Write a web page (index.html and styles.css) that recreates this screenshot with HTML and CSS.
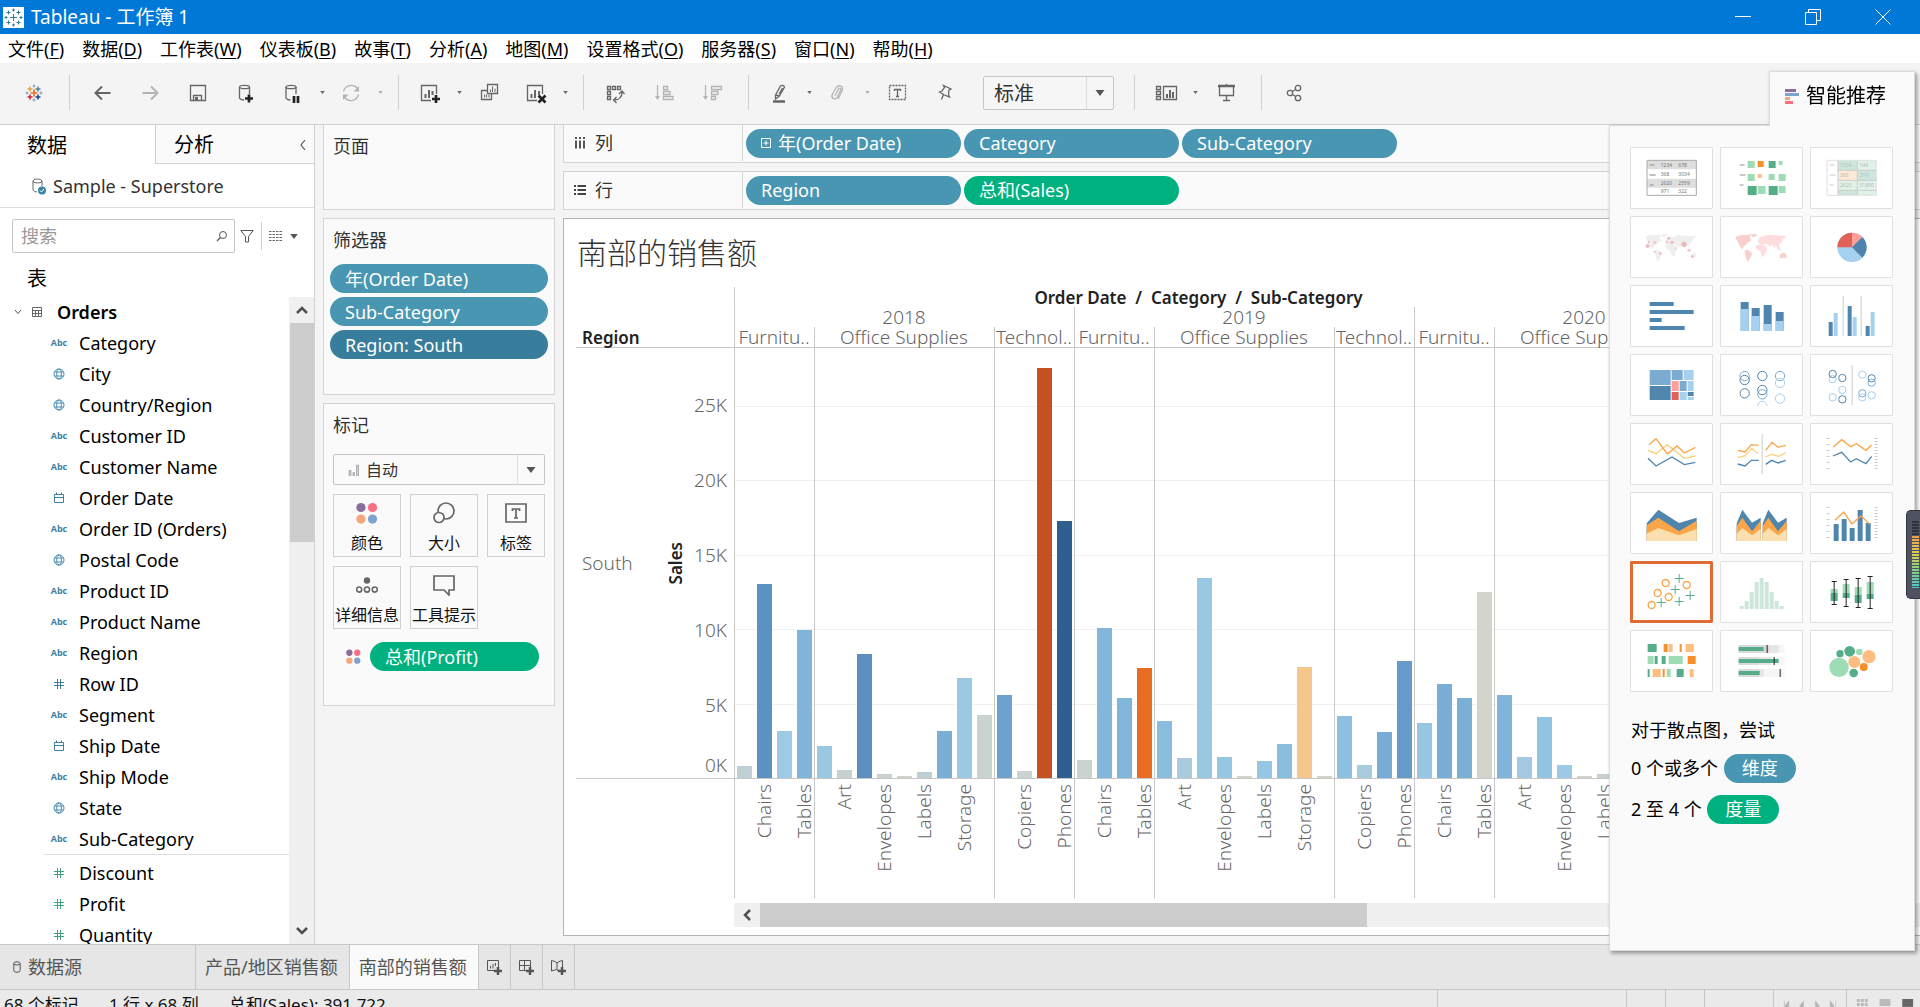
FILE: index.html
```html
<!DOCTYPE html>
<html lang="zh-CN">
<head>
<meta charset="utf-8">
<title>Tableau - 工作簿 1</title>
<link rel="stylesheet" href="styles.css">
</head>
<body>
<svg class="defs" aria-hidden="true">
  <symbol id="globe" viewBox="0 0 12 12"><g fill="none" stroke="#4a8fb0"><circle cx="6" cy="6" r="5"/><ellipse cx="6" cy="6" rx="2.3" ry="5"/><path d="M1.5 4h9M1.5 8h9"/></g></symbol>
  <symbol id="cal" viewBox="0 0 12 12"><path d="M1.5 2.5h9v8h-9zM1.5 5.5h9M3.5 .5v2M8.500 .5v2" fill="none" stroke="#3f7f9f"/></symbol>
  <symbol id="hash" viewBox="0 0 12 12"><path d="M4.500 1v10M7.500 1v10M1 4.500h10M1 7.500h10" fill="none" stroke="currentColor"/></symbol>
  <symbol id="caret" viewBox="0 0 6 4"><path d="M0 0h6L3 4z" fill="currentColor"/></symbol>
  <symbol id="dots" viewBox="0 0 20 20"><circle cx="4.500" cy="5" r="4.200" fill="#8a6f9e"/><circle cx="15" cy="5" r="4.200" fill="#f76f81"/><circle cx="4.500" cy="15.500" r="4.200" fill="#f3a77b"/><circle cx="15" cy="15.500" r="4.200" fill="#7ea3cc"/></symbol>
</svg>

<header class="titlebar">
  <svg class="app-icon" viewBox="0 0 21 21"><rect width="21" height="21" fill="#fff"/><path d="M10.500 7v7M7 10.500h7M5.500 3.500v4M3.500 5.500h4M15.500 3.500v4M13.500 5.500h4M5.500 13.500v4M3.500 15.500h4M15.500 13.500v4M13.500 15.500h4M10.500 1.500v3M9 3h3M10.500 16.500v3M9 18h3M1.500 10.500h3M3 9v3M16.500 10.500h3M18 9v3" stroke="#2b7ba3" fill="none"/></svg>
  <h1>Tableau - 工作簿 1</h1>
  <div class="win-buttons">
    <button aria-label="最小化"><svg viewBox="0 0 16 16"><path d="M0 7.500h16" stroke="#fff"/></svg></button>
    <button aria-label="还原"><svg viewBox="0 0 16 16"><path d="M.5 3.500h11v12H.5zM3.500 3.500v-3h12v11h-4" stroke="#fff" fill="none"/></svg></button>
    <button aria-label="关闭"><svg viewBox="0 0 16 16"><path d="M.5 .5l15 15M15.500 .5l-15 15" stroke="#fff" fill="none"/></svg></button>
  </div>
</header>

<nav class="menubar">
  <button>文件(<u>F</u>)</button><button>数据(<u>D</u>)</button><button>工作表(<u>W</u>)</button><button>仪表板(<u>B</u>)</button><button>故事(<u>T</u>)</button><button>分析(<u>A</u>)</button><button>地图(<u>M</u>)</button><button>设置格式(<u>O</u>)</button><button>服务器(<u>S</u>)</button><button>窗口(<u>N</u>)</button><button>帮助(<u>H</u>)</button>
</nav>

<div class="toolbar" role="toolbar">
  <button class="tool" aria-label="开始"><svg viewBox="0 0 24 24"><g fill="none" stroke-width="1.500"><path d="M12 8.500v7M8.500 12h7" stroke="#eb6b2d" stroke-width="1.700"/><path d="M8 5.500v5M5.500 8h5" stroke="#e8a33d"/><path d="M16 5.500v5M13.500 8h5" stroke="#4f8199"/><path d="M8 13.500v5M5.500 16h5" stroke="#d0203f"/><path d="M16 13.500v5M13.500 16h5" stroke="#1f3f80"/><path d="M12 3.500v3M10.500 5h3M12 17.500v3M10.500 19h3M5 10.500v3M3.500 12h3M19 10.500v3M17.500 12h3" stroke="#7d9ab5" stroke-width="1"/></g></svg></button>
  <span class="sep"></span>
  <button class="tool" aria-label="撤消"><svg viewBox="0 0 24 24"><path d="M19.500 12H5M11 5.500L4.500 12l6.500 6.500" class="ln heavy"/></svg></button>
  <button class="tool off" aria-label="重做"><svg viewBox="0 0 24 24"><path d="M3.500 12H18M12 5.500l6.500 6.500-6.500 6.500" class="ln heavy"/></svg></button>
  <button class="tool" aria-label="保存"><svg viewBox="0 0 24 24"><path d="M3.500 4.500h15v15h-15zM6.500 19.500v-5h8v5" class="ln mid"/><path d="M8 16h3v3H8z" class="fl"/></svg></button>
  <button class="tool" aria-label="新建数据源"><svg viewBox="0 0 24 24"><ellipse cx="9.500" cy="6" rx="5" ry="1.700" class="ln mid"/><path d="M4.500 6v11q1 2 4.500 2M14.500 6v7" class="ln mid"/><path d="M10 17.500h8M14 13.500v8" class="ln over"/></svg></button>
  <button class="tool split" aria-label="暂停自动更新"><svg viewBox="0 0 24 24"><ellipse cx="10" cy="6" rx="5" ry="1.700" class="ln mid"/><path d="M5 6v11q1 2 4.500 2M15 6v7" class="ln mid"/><path d="M13 15v7M17 15v7" class="ln over"/></svg></button>
  <button class="drop" aria-label="更多"><svg><use href="#caret"/></svg></button>
  <button class="tool split off" aria-label="刷新"><svg viewBox="0 0 24 24"><path d="M4.500 10.500a8 8 0 0 1 14-3M19.500 13.500a8 8 0 0 1-14 3" class="ln mid"/><path d="M20 5v5.500h-5.500zM4 19v-5.500h5.500z" class="fl"/></svg></button>
  <button class="drop off" aria-label="更多"><svg><use href="#caret"/></svg></button>
  <span class="sep"></span>
  <button class="tool split" aria-label="新建工作表"><svg viewBox="0 0 24 24"><path d="M13 19.500H3.500v-15h15V13" class="ln mid"/><path d="M7.500 13v4M11 9v8M14.500 10v4" class="ln heavy"/><path d="M14 18h8M18 14v8" class="ln over"/></svg></button>
  <button class="drop" aria-label="更多"><svg><use href="#caret"/></svg></button>
  <button class="tool" aria-label="复制"><svg viewBox="0 0 24 24"><path d="M9.500 3.500h10v9h-10zM9 9.500H3.500v9h10v-5.500" class="ln mid"/><path d="M12.500 8.500v2.500M14.500 5.500V11M17 7.500V11M6.500 13.500v3M8.500 13.500v3M11 13.500v3" class="ln"/></svg></button>
  <button class="tool split" aria-label="清除"><svg viewBox="0 0 24 24"><path d="M13 19.500H3.500v-15h15V13" class="ln mid"/><path d="M7.500 13v4M11 9v8M15 10v4" class="ln heavy"/><path d="M14.500 14.500l7 7M21.500 14.500l-7 7" class="ln over"/></svg></button>
  <button class="drop" aria-label="更多"><svg><use href="#caret"/></svg></button>
  <span class="sep"></span>
  <button class="tool" aria-label="交换行和列"><svg viewBox="0 0 24 24"><path d="M2.500 5.500h3v3h-3zM7.500 5.500h3v3h-3zM12.500 5.500h3v3h-3zM2.500 10.500h3v3h-3zM2.500 15.500h3v3h-3z" class="ln mid"/><path d="M9 19q8 0 8-8M11.500 16L8.500 19l3 3M14 13l3-3 2.500 3" class="ln mid"/></svg></button>
  <button class="tool off" aria-label="升序"><svg viewBox="0 0 24 24"><path d="M4.500 4v13M10.500 5.500h4v3h-4zM10.500 10.500h6.500v3h-6.500zM10.500 15.500h9.500v3h-9.500z" class="ln mid"/><path d="M2 15h5l-2.500 4z" class="fl"/></svg></button>
  <button class="tool off" aria-label="降序"><svg viewBox="0 0 24 24"><path d="M4.500 4v13M10.500 5.500h10v3h-10zM10.500 10.500h6.500v3h-6.500zM10.500 15.500h4v3h-4z" class="ln mid"/><path d="M2 15h5l-2.500 4z" class="fl"/></svg></button>
  <span class="sep"></span>
  <button class="tool split" aria-label="突出显示"><svg viewBox="0 0 24 24"><path d="M7.500 14l5-9q2.500-1.500 4 1l-5 9zM7.500 14v4l4-3M14.500 7l-3.500 6" class="ln mid"/><path d="M5 20.500h12" class="ln bold"/></svg></button>
  <button class="drop" aria-label="更多"><svg><use href="#caret"/></svg></button>
  <button class="tool split off" aria-label="组"><svg viewBox="0 0 24 24"><path d="M9 15l3.500-7q2-2 2.500.5L11.500 16q-2 3-4.500 1.500Q5 16 6.500 13L10 7q2-3 5-2 2.500 1.500 1 5l-4 8" class="ln mid"/></svg></button>
  <button class="drop off" aria-label="更多"><svg><use href="#caret"/></svg></button>
  <button class="tool" aria-label="显示标记标签"><svg viewBox="0 0 24 24"><path d="M3.500 4.500h16v14h-16z" class="ln mid" stroke-dasharray="2 1"/><path d="M8.500 10V8.500h6V10M11.500 8.500v7M10 15.500h3" class="ln mid"/></svg></button>
  <button class="tool" aria-label="固定轴"><svg viewBox="0 0 24 24"><path d="M9.500 4.500L17 8l-2 1-.5 4.500 1 2.500-5-2-5-3 2.500-1 2.500-3.500zM9.500 13.500L7.500 18.500" class="ln mid"/></svg></button>
  <label class="fit combo"><select aria-label="适合"><option>标准</option></select><svg><use href="#caret"/></svg></label>
  <span class="sep"></span>
  <button class="tool split" aria-label="显示卡"><svg viewBox="0 0 24 24"><path d="M2.500 5.500h4v3h-4zM2.500 10.500h4v3h-4zM2.500 15.500h4v3h-4zM9.500 5.500h13v13h-13z" class="ln mid"/><path d="M13 13v4M16 9v8M19 11v6" class="ln heavy"/></svg></button>
  <button class="drop" aria-label="更多"><svg><use href="#caret"/></svg></button>
  <button class="tool" aria-label="演示模式"><svg viewBox="0 0 24 24"><path d="M4 5h17" class="ln bold"/><path d="M5.500 6v8.500h14V6M12.500 3v2M12.500 15v4.500M9 19.500h7" class="ln mid"/></svg></button>
  <span class="sep"></span>
  <button class="tool" aria-label="共享"><svg viewBox="0 0 24 24"><circle cx="7" cy="12" r="2.700" class="ln mid"/><circle cx="15" cy="7" r="2.700" class="ln mid"/><circle cx="15" cy="17" r="2.700" class="ln mid"/><path d="M9.500 10.500l3.200-2M9.500 13.500l3.200 2" class="ln mid"/></svg></button>
</div>

<main class="workspace">
  <aside class="data-pane">
    <div class="pane-tabs">
      <button class="pane-tab on">数据</button>
      <button class="pane-tab">分析<svg viewBox="0 0 6 12"><path d="M5 1L1 6l4 5" fill="none" stroke="#555" stroke-width="1.200"/></svg></button>
    </div>
    <div class="source"><svg viewBox="0 0 16 18"><path d="M2 4v9q1 2 4 2M11 4v5" class="ln"/><ellipse cx="6.500" cy="4" rx="4.500" ry="2" class="ln"/><circle cx="11" cy="13.500" r="4" fill="#3a85a8"/><path d="M9 13.500l1.500 1.500 2.500-3" stroke="#fff" fill="none"/></svg>Sample - Superstore</div>
    <div class="search-row">
      <label class="search"><input type="text" placeholder="搜索" aria-label="搜索"><svg viewBox="0 0 12 12"><circle cx="7" cy="5" r="3.500" class="ln"/><path d="M4.500 7.500L1 11" class="ln mid"/></svg></label>
      <button class="filter-btn" aria-label="筛选"><svg viewBox="0 0 14 14"><path d="M.8 1.500h12.400L8.500 7.500v5.500h-3V7.500z" class="ln"/></svg></button>
      <button class="view-btn" aria-label="视图"><svg class="rows" viewBox="0 0 13 10"><path d="M0 .5h13M0 3.500h13M0 6.500h13M0 9.500h13" stroke="#666" stroke-dasharray="2.500 1"/></svg><svg class="car"><use href="#caret"/></svg></button>
    </div>
    <h2 class="tables-head">表</h2>
    <div class="tree">
      <ul class="fields">
        <li class="table-name"><svg class="chev" viewBox="0 0 8 6"><path d="M1 1l3 3.500L7 1" fill="none" stroke="#555"/></svg><svg class="tbl" viewBox="0 0 12 12"><path d="M1.500 1.500h9v9h-9zM1.500 4.500h9M1.500 7.500h9M4.500 4v6.500M7.500 4v6.500" fill="none" stroke="#666"/></svg>Orders</li>
        <li><i>Abc</i>Category</li>
        <li><svg><use href="#globe"/></svg>City</li>
        <li><svg><use href="#globe"/></svg>Country/Region</li>
        <li><i>Abc</i>Customer ID</li>
        <li><i>Abc</i>Customer Name</li>
        <li><svg><use href="#cal"/></svg>Order Date</li>
        <li><i>Abc</i>Order ID (Orders)</li>
        <li><svg><use href="#globe"/></svg>Postal Code</li>
        <li><i>Abc</i>Product ID</li>
        <li><i>Abc</i>Product Name</li>
        <li><i>Abc</i>Region</li>
        <li><svg><use href="#hash"/></svg>Row ID</li>
        <li><i>Abc</i>Segment</li>
        <li><svg><use href="#cal"/></svg>Ship Date</li>
        <li><i>Abc</i>Ship Mode</li>
        <li><svg><use href="#globe"/></svg>State</li>
        <li><i>Abc</i>Sub-Category</li>
        <li class="measure first"><svg><use href="#hash"/></svg>Discount</li>
        <li class="measure"><svg><use href="#hash"/></svg>Profit</li>
        <li class="measure"><svg><use href="#hash"/></svg>Quantity</li>
      </ul>
      <div class="vscroll"><svg viewBox="0 0 12 8"><path d="M1 7l5-5 5 5" class="arrow"/></svg><span class="thumb"></span><svg viewBox="0 0 12 8"><path d="M1 1l5 5 5-5" class="arrow"/></svg></div>
    </div>
  </aside>

  <section class="cards">
    <div class="card pages"><h3>页面</h3></div>
    <div class="card filters"><h3>筛选器</h3>
      <button class="pill">年(Order Date)</button>
      <button class="pill">Sub-Category</button>
      <button class="pill dark">Region: South</button>
    </div>
    <div class="card marks"><h3>标记</h3>
      <label class="mark-type combo"><svg class="bars" viewBox="0 0 12 12"><path d="M1 6.500h2v5H1zM5 8.500h1.500v3H5zM8.500 1h2v10.500h-2z" fill="#ccc" stroke="#999" stroke-width=".7"/></svg><select aria-label="标记类型"><option>自动</option></select><svg class="car"><use href="#caret"/></svg></label>
      <div class="mark-grid">
        <button><svg viewBox="0 0 20 20"><use href="#dots"/></svg>颜色</button>
        <button><svg viewBox="0 0 22 22"><circle cx="13" cy="9" r="8" class="ln bigline"/><circle cx="6" cy="15.500" r="5" stroke="#666" stroke-width="1.700" fill="#fafafa"/></svg>大小</button>
        <button><svg viewBox="0 0 22 22"><path d="M1 2h20v18H1z" class="ln bigline"/><path d="M7.500 9V7h7v2M11 7v9M9 16h4" class="ln bigline"/></svg>标签</button>
        <button><svg viewBox="0 0 24 22"><circle cx="12" cy="6" r="3.500" fill="#666"/><circle cx="3.500" cy="16" r="2.800" class="ln bigline"/><circle cx="12" cy="16" r="2.800" class="ln bigline"/><circle cx="20.500" cy="16" r="2.800" class="ln bigline"/></svg>详细信息</button>
        <button><svg viewBox="0 0 22 22"><path d="M1 2h20v14h-5v5l-5-5H1z" class="ln bigline"/></svg>工具提示</button>
      </div>
      <div class="encoding"><svg><use href="#dots"/></svg><button class="pill green">总和(Profit)</button></div>
    </div>
  </section>

  <section class="viz">
    <div class="shelf"><span class="shelf-name"><svg viewBox="0 0 12 12"><path d="M2 0v2M6 0v2M10 0v2M2 3.500v8M6 3.500v8M10 3.500v8" stroke="#444" stroke-width="1.800"/></svg>列</span><button class="pill"><svg viewBox="0 0 10 10"><path d="M.5 .5h9v9h-9zM5 2.500v5M2.500 5h5" fill="none" stroke="#fff"/></svg>年(Order Date)</button><button class="pill">Category</button><button class="pill">Sub-Category</button></div>
    <div class="shelf"><span class="shelf-name"><svg viewBox="0 0 12 12"><path d="M0 2h2M0 6h2M0 10h2M3.500 2h8.500M3.500 6h8.500M3.500 10h8.500" stroke="#444" stroke-width="1.800"/></svg>行</span><button class="pill">Region</button><button class="pill green">总和(Sales)</button></div>

    <div class="sheet">
      <h2>南部的销售额</h2>
      <div class="chart">
        <div class="row-head">
          <div class="region-label">Region</div>
          <div class="row-body">
            <span class="member">South</span><span class="axis-title">Sales</span>
            <div class="ticks"><span>25K</span><span>20K</span><span>15K</span><span>10K</span><span>5K</span><span>0K</span></div>
          </div>
        </div>
        <div class="col-area">
          <div class="field-title">Order Date&nbsp; / &nbsp;Category&nbsp; / &nbsp;Sub-Category</div>
          <div class="years">
            <div class="year"><div class="year-name">2018</div><div class="panes">
              <div class="pane"><div class="cat">Furnitu..</div><div class="plot"><b style="height:12px;background:#bfcfd3"></b><b style="height:194px;background:#5c92c1"></b><b style="height:47px;background:#9ccbe3"></b><b style="height:148px;background:#80b5da"></b></div><div class="names"><span>Chairs</span><span>Tables</span></div></div>
              <div class="pane wide"><div class="cat">Office Supplies</div><div class="plot"><b style="height:32px;background:#9ac8e2"></b><b style="height:8px;background:#c4d1d0"></b><b style="height:124px;background:#5b8fbe"></b><b style="height:4px;background:#c8d2ce"></b><b style="height:2px;background:#d0d1c8"></b><b style="height:6px;background:#bccfd4"></b><b style="height:47px;background:#79afd7"></b><b style="height:100px;background:#9bc9e2"></b><b style="height:63px;background:#c9d3cf"></b></div><div class="names"><span>Art</span><span>Envelopes</span><span>Labels</span><span>Storage</span></div></div>
              <div class="pane"><div class="cat">Technol..</div><div class="plot"><b style="height:83px;background:#6ea2ce"></b><b style="height:7px;background:#c9d3cf"></b><b style="height:410px;background:#c55122"></b><b style="height:257px;background:#2d5f91"></b></div><div class="names"><span>Copiers</span><span>Phones</span></div></div>
            </div></div>
            <div class="year"><div class="year-name">2019</div><div class="panes">
              <div class="pane"><div class="cat">Furnitu..</div><div class="plot"><b style="height:18px;background:#c9d3cf"></b><b style="height:150px;background:#82b6da"></b><b style="height:80px;background:#82b5da"></b><b style="height:110px;background:#e86c22"></b></div><div class="names"><span>Chairs</span><span>Tables</span></div></div>
              <div class="pane wide"><div class="cat">Office Supplies</div><div class="plot"><b style="height:57px;background:#8abcdd"></b><b style="height:20px;background:#aacbdd"></b><b style="height:200px;background:#99c8e3"></b><b style="height:21px;background:#95c6e2"></b><b style="height:2px;background:#d3d4ca"></b><b style="height:17px;background:#95c6e3"></b><b style="height:34px;background:#8abedd"></b><b style="height:111px;background:#f5c78c"></b><b style="height:2px;background:#d3d4ca"></b></div><div class="names"><span>Art</span><span>Envelopes</span><span>Labels</span><span>Storage</span></div></div>
              <div class="pane"><div class="cat">Technol..</div><div class="plot"><b style="height:62px;background:#8cbfe0"></b><b style="height:13px;background:#a8cbdd"></b><b style="height:46px;background:#77acd6"></b><b style="height:117px;background:#669ac8"></b></div><div class="names"><span>Copiers</span><span>Phones</span></div></div>
            </div></div>
            <div class="year"><div class="year-name">2020</div><div class="panes">
              <div class="pane"><div class="cat">Furnitu..</div><div class="plot"><b style="height:55px;background:#96c6e1"></b><b style="height:94px;background:#79afd7"></b><b style="height:80px;background:#7bb0d6"></b><b style="height:186px;background:#d3d4cb"></b></div><div class="names"><span>Chairs</span><span>Tables</span></div></div>
              <div class="pane wide"><div class="cat">Office Supplies</div><div class="plot"><b style="height:83px;background:#80b4da"></b><b style="height:21px;background:#a2c9df"></b><b style="height:61px;background:#90c4e2"></b><b style="height:13px;background:#9cc9e3"></b><b style="height:2px;background:#d3d4ca"></b><b style="height:4px;background:#c6d2d0"></b></div><div class="names"><span>Art</span><span>Envelopes</span><span>Labels</span></div></div>
            </div></div>
          </div>
          <div class="hscroll"><svg viewBox="0 0 8 12"><path d="M7 1L2 6l5 5" class="arrow"/></svg><span class="thumb"></span></div>
        </div>
      </div>
    </div>
  </section>
</main>

<nav class="sheet-tabs">
  <button class="source-tab"><svg viewBox="0 0 8 12"><path d="M.8 2.500v7q0 1.800 3.200 1.800t3.200-1.800v-7Q7.200.8 4 .8T.8 2.500q0 1.500 3.200 1.500t3.200-1.500" class="ln"/></svg>数据源</button>
  <button>产品/地区销售额</button>
  <button class="on">南部的销售额</button>
  <button class="new" aria-label="新建工作表"><svg viewBox="0 0 16 16"><path d="M8 11.500H1.500v-10h11V8M4.500 7v2.500M7 5v4.500M9.500 4v3" class="ln"/><path d="M8 12h8M12 8v8" class="ln bold"/></svg></button>
  <button class="new" aria-label="新建仪表板"><svg viewBox="0 0 16 16"><path d="M8 11.500H1.500v-10h11V8M6.500 1.500v10M1.500 6.500h11" class="ln"/><path d="M8 12h8M12 8v8" class="ln bold"/></svg></button>
  <button class="new" aria-label="新建故事"><svg viewBox="0 0 16 16"><path d="M8 12L6.500 10.500 1.500 12V1.500L5 2.500l2 1.500 2-1.500 3.500-1V8M7 4v7" class="ln"/><path d="M8 12h8M12 8v8" class="ln bold"/></svg></button>
</nav>
<footer class="status">
  <span>68 个标记</span><span>1 行 x 68 列</span><span>总和(Sales): 391,722</span>
  <div class="status-right"><i class="c1"></i><i class="c2"></i><i class="c2"></i><i class="c3"></i>
    <svg class="nav-icons" viewBox="0 0 73 17"><path d="M10.500 11v10M15 11v10l-4-5zM30 11v10l-4-5zM42 11v10l4-5zM57 11v10l4-5zM62.500 11v10" fill="#b4b4b4" stroke="#b4b4b4" stroke-width=".6"/></svg>
    <svg class="view-icons" viewBox="0 0 74 17"><path d="M10 9h3v3h-3zM14 9h3v3h-3zM18 9h3v3h-3zM10 13h3v3h-3zM14 13h3v3h-3zM18 13h3v3h-3zM33 9h11v7H33z" fill="#bbb"/><path d="M56 9h11v8H56z" fill="#666"/></svg>
  </div>
</footer>

<aside class="show-me">
  <div class="show-tab"><svg viewBox="0 0 14 15"><path d="M0 0h11v3H0z" fill="#8a6f9e"/><path d="M0 4h14v3H0z" fill="#7ea3cc"/><path d="M0 8h5v3H0z" fill="#f3a77b"/><path d="M0 12h8v3H0z" fill="#f76f81"/></svg>智能推荐</div>
  <div class="show-body">
    <div class="types">
      <button aria-label="文本表"><svg viewBox="94 54 243 180"><path d="M142 91h148v105H142z" fill="#fff"/><path d="M142 91h148v27H142zM142 146h148v27H142z" fill="#dedede"/><path d="M142 91h148v105H142z" fill="none" stroke="#aaa" stroke-width="3"/><path d="M150 105h15M150 135h18M150 165h12" stroke="#aaa" stroke-width="5"/><g font-size="15" fill="#777"><text x="183" y="111">1234</text><text x="236" y="111">678</text><text x="183" y="138">368</text><text x="236" y="138">3034</text><text x="183" y="165">2620</text><text x="236" y="165">2559</text><text x="183" y="190">971</text><text x="236" y="190">322</text></g></svg></button>
      <button aria-label="压力图"><svg viewBox="364 54 243 180"><path d="M420 105h15M420 135h18M420 165h12" stroke="#bbb" stroke-width="5"/><path d="M444 93h21v21h-21zM537 93h12v12h-12zM444 132h21v21h-21zM507 132h18v18h-18zM537 132h21v21h-21zM474 168h24v24h-24zM537 168h21v21h-21z" fill="#9edcb6"/><path d="M507 93h21v21h-21zM444 168h27v27h-27zM507 168h27v27h-27z" fill="#56ad8a"/><path d="M474 93h18v18h-18z" fill="#f58f2c"/><path d="M474 132h12v12h-12z" fill="#ffbd7f"/></svg></button>
      <button aria-label="突出显示表"><svg viewBox="634 54 243 180"><path d="M715 91h115v105H715z" fill="#e0f2e7"/><path d="M715 91h58v30h-58zM773 121h57v30h-57zM715 181h58v15h-58z" fill="#cce6da"/><path d="M715 121h58v30h-58z" fill="#ffe9d5"/><path d="M715 91v105M773 91v105M715 121h115M715 151h115M715 181h115" stroke="#ccc" stroke-width="3"/><path d="M682 91h148v105H682z" fill="none" stroke="#e0e0e0" stroke-width="3"/><path d="M690 105h15M690 135h18M690 165h12" stroke="#ddd" stroke-width="5"/><g font-size="15" fill="#bdbdbd"><text x="721" y="110">1234</text><text x="780" y="110">546</text><text x="721" y="141">368</text><text x="780" y="141">310</text><text x="721" y="171">2620</text><text x="780" y="171">51890</text></g></svg></button>

      <button aria-label="符号地图"><svg viewBox="94 261 243 180"><g fill="#efefef"><path d="M138 320l12-4 24-1 10-3-4 10 6 10-10 4-14 14-4 8 8 2-10-3-10-17-6-12zM183 313l20-1-6 8-8 2zM164 362l10-3 14 10-6 14-8 12-6-15zM198 330l10-12 10 4 16-6 52 2 2 6-8 2-2 10-8 4-2 12-8-4-4 10-6-12-10 6-12-6-14 2-14-4zM198 346l16-3 16 6 2 10-8 18-8 1-4-15-12-6zM276 372l8-6 7 6-3 10-12-2z"/></g><g fill="#e9b4ba" opacity=".9"><circle cx="144" cy="348" r="6"/><circle cx="253" cy="343" r="8"/><circle cx="207" cy="325" r="4"/><circle cx="217" cy="337" r="5"/><circle cx="165" cy="365" r="3"/><circle cx="278" cy="380" r="4"/><circle cx="147" cy="336" r="3"/></g><g fill="#f6c9c9"><circle cx="166" cy="337" r="5"/><circle cx="182" cy="370" r="5"/><circle cx="268" cy="361" r="5"/><circle cx="228" cy="355" r="3"/><circle cx="202" cy="336" r="4"/></g></svg></button>
      <button aria-label="地图"><svg viewBox="364 261 243 180"><g transform="translate(270 0)"><path fill="#f8cfcd" d="M138 320l12-4 24-1 10-3-4 10 6 10-10 4-14 14-4 8 8 2-10-3-10-17-6-12zM183 313l20-1-6 8-8 2zM164 362l10-3 14 10-6 14-8 12-6-15zM270 376l6-6 8-2 7 6-1 10-10-1-10 1z"/><path fill="#fddddd" d="M206 330l6-10 10-2 16-4 48 4 2 6-8 2-2 10-8 4-2 10 6 14-10-6-6-12-2 12-6-12-10 2-12-6-14 2-8-4zM198 348l16-5 16 6 2 10-8 18-8 4-4-18-12-6z"/></g></svg></button>
      <button aria-label="饼图"><svg viewBox="634 261 243 180"><circle cx="757" cy="352" r="44" fill="#a6d0ef"/><path d="M757 352V308a44 44 0 0 0-44 44z" fill="#e16257"/><path d="M757 352V308a44 44 0 0 1 31 13z" fill="#ff9e9b"/><path d="M757 352l31-31a44 44 0 0 1 0 62z" fill="#4e83ad"/></svg></button>

      <button aria-label="水平条"><svg viewBox="94 468 243 180"><path d="M150 516h72v12h-72zM150 540h132v12H150zM150 564h36v12h-36zM150 588h105v12H150z" fill="#5085ae"/></svg></button>
      <button aria-label="堆叠条"><svg viewBox="364 468 243 180"><path d="M423 516h24v87h-24zM456 534h24v69h-24zM492 525h24v78h-24zM528 546h24v57h-24z" fill="#5085ae"/><path d="M423 537h24v66h-24zM456 558h24v45h-24zM492 582h24v21h-24zM528 573h24v30h-24z" fill="#a6d0ef"/></svg></button>
      <button aria-label="并排条"><svg viewBox="634 468 243 180"><path d="M730.500 498v120M784.500 498v120" stroke="#ccc" stroke-width="3"/><path d="M687 576h12v42h-12zM744 528h12v90h-12zM798 588h12v30h-12z" fill="#5085ae"/><path d="M702 549h12v69h-12zM759 561h12v57h-12zM813 546h12v72h-12z" fill="#a6d0ef"/></svg></button>

      <button aria-label="树状图"><svg viewBox="94 675 243 180"><path d="M150 720h63v45h-63zM216 720h33v30h-33zM240 753h21v30h-21z" fill="#7babd0"/><path d="M150 768h63v42h-63zM264 786h18v12h-18z" fill="#5085ae"/><path d="M252 720h30v30h-30zM264 753h18v30h-18zM240 786h21v24h-21zM264 801h18v9h-18z" fill="#a6d0ef"/><path d="M216 753h21v30h-21z" fill="#ff9e9b"/><path d="M216 786h21v24h-21z" fill="#e16257"/></svg></button>
      <button aria-label="圆视图"><svg viewBox="364 675 243 180"><g fill="none" stroke-width="3"><g stroke="#5085ae"><circle cx="435" cy="750" r="14"/><circle cx="435" cy="790" r="14"/><circle cx="488" cy="738" r="14"/><circle cx="488" cy="780" r="14"/></g><g stroke="#7babd0"><circle cx="435" cy="738" r="14"/><circle cx="488" cy="793" r="14"/><circle cx="541" cy="738" r="14"/></g><g stroke="#a6d0ef"><circle cx="541" cy="759" r="14"/><circle cx="541" cy="806" r="14"/><path d="M474 828a14 14 0 0 1 28 0"/></g></g></svg></button>
      <button aria-label="并排圆"><svg viewBox="634 675 243 180"><path d="M757.500 705v120" stroke="#ccc" stroke-width="3"/><g fill="none" stroke-width="3"><g stroke="#a6d0ef"><circle cx="699" cy="747" r="11"/><circle cx="728" cy="780" r="11"/><circle cx="699" cy="802" r="11"/><circle cx="788" cy="734" r="11"/><circle cx="816" cy="796" r="11"/><circle cx="788" cy="802" r="11"/></g><g stroke="#5085ae"><circle cx="699" cy="732" r="11"/><circle cx="728" cy="744" r="11"/><circle cx="728" cy="808" r="11"/><circle cx="816" cy="745" r="11"/></g><g stroke="#7babd0"><circle cx="816" cy="758" r="11"/><circle cx="788" cy="790" r="11"/></g></g></svg></button>

      <button aria-label="线(连续)"><svg viewBox="94 42 243 180"><g fill="none" stroke-width="4"><path d="M145 121l24 10 34-27 51 41 33-7" stroke="#f9d27c"/><path d="M148 104l21-18 34 46 29-24 22 21 33-17" stroke="#faa548"/><path d="M145 145l24 23 48-27 37 23 33-7" stroke="#5085ae"/></g></svg></button>
      <button aria-label="线(离散)"><svg viewBox="364 42 243 180"><path d="M487.500 72v120" stroke="#ccc" stroke-width="3"/><g fill="none" stroke-width="4"><path d="M414 142l22-4 20-23 18 15M496 141l21-8 20 6 21-11" stroke="#f9d27c"/><path d="M414 121l22 5 19-22 22 2M498 121l19-24 18 15 23-6" stroke="#faa548"/><path d="M414 162l22 6 19-17h22M498 163l18-12 19 8 23-8" stroke="#5085ae"/></g></svg></button>
      <button aria-label="双线"><svg viewBox="634 42 243 180"><g fill="none" stroke-width="4"><path d="M700 112l26-23 27 21 17-9 29 20 17-16" stroke="#faa548"/><path d="M700 138l26-11 27 29 17-10 29 15 17-22" stroke="#5085ae"/></g><path d="M685.500 84v96" stroke="#ccc" stroke-width="9" stroke-dasharray="3 15"/><path d="M829.500 84v96" stroke="#ccc" stroke-width="9" stroke-dasharray="3 6"/></svg></button>

      <button aria-label="面积图(连续)"><svg viewBox="94 249 243 180"><path d="M141 340l35-41 62 40 53-16v70H141z" fill="#5085ae"/><path d="M141 346l35-23 62 41 53-32v61H141z" fill="#faa548"/><path d="M141 371l35-17 62 22 53-19v36H141z" fill="#fae0af"/></svg></button>
      <button aria-label="面积图(离散)"><svg viewBox="364 249 243 180"><g id="area-half"><path d="M411 340l17-41 29 39 26-15v70h-72z" fill="#5085ae"/><path d="M411 348l17-25 29 41 26-32v61h-72z" fill="#faa548"/><path d="M411 371l17-17 29 22 26-19v36h-72z" fill="#fae0af"/></g><use href="#area-half" x="78"/></svg></button>
      <button aria-label="双组合"><svg viewBox="634 249 243 180"><path d="M702 342h15v51h-15zM726 327h15v66h-15zM750 354h15v39h-15zM774 300h15v93h-15zM798 339h15v54h-15z" fill="#5085ae"/><path d="M706 331l26-25 25 36 27-24 26 24" stroke="#faa548" stroke-width="4" fill="none"/><path d="M685.500 291v96" stroke="#ccc" stroke-width="9" stroke-dasharray="3 15"/><path d="M829.500 291v96" stroke="#ccc" stroke-width="9" stroke-dasharray="3 6"/></svg></button>

      <button class="on" aria-label="散点图"><svg viewBox="94 456 243 180"><g fill="none" stroke="#faa548" stroke-width="4"><circle cx="198" cy="519" r="10.500"/><circle cx="261" cy="525" r="10.500"/><circle cx="174" cy="549" r="10.500"/><circle cx="207" cy="561" r="10.500"/><circle cx="156" cy="585" r="10.500"/></g><path d="M225 505.500h27M238.500 492v27M213 538.500h27M226.500 525v27M258 556.500h27M271.500 543v27M225 574.500h27M238.500 561v27M171 577.500h27M184.500 564v27" stroke="#56ad8a" stroke-width="3"/></svg></button>
      <button aria-label="直方图"><svg viewBox="364 456 243 180"><path d="M420 588h12v9h-12zM435 573h12v24h-12zM450 546h12v51h-12zM465 516h12v81h-12zM480 504h12v93h-12zM495 516h12v81h-12zM510 546h12v51h-12zM525 573h12v24h-12zM540 588h12v9h-12z" fill="#cce6da"/></svg></button>
      <button aria-label="盒须图"><svg viewBox="634 456 243 180"><path d="M693 537h21v12h-21zM729 522h21v27h-21zM765 531h21v24h-21zM801 516h21v36h-21z" fill="#9edcb6"/><path d="M693 549h21v24h-21zM729 549h21v15h-21zM765 555h21v24h-21zM801 552h21v15h-21z" fill="#56ad8a"/><path d="M703.500 514v69M696 514.500h15M696 583.500h15M739.500 508v81M732 508.500h15M732 589.500h15M775.500 505v87M768 505.500h15M768 592.500h15M811.500 499v96M804 499.500h15M804 595.500h15" stroke="#222" stroke-width="3"/></svg></button>

      <button aria-label="甘特图"><svg viewBox="94 663 243 180"><path d="M144 702h27v24h-27zM165 738h9v24h-9zM186 738h12v24h-12zM144 777h6v24h-6zM231 777h21v24h-21z" fill="#56ad8a"/><path d="M144 738h18v24h-18zM207 738h42v24h-42zM201 777h12v24h-12z" fill="#9edcb6"/><path d="M192 702h12v24h-12zM240 702h6v24h-6zM264 738h24v24h-24zM189 777h6v24h-6z" fill="#f58f2c"/><path d="M207 702h12v24h-12zM258 702h24v24h-24zM159 777h24v24h-24zM270 777h12v24h-12z" fill="#ffbd7f"/></svg></button>
      <button aria-label="标靶图"><svg viewBox="364 663 243 180"><path d="M417 705h138v24H417zM417 741h138v24H417zM417 777h138v24H417z" fill="#f4f6f8"/><path d="M417 705h120v24H417zM417 741h96v24h-96zM417 777h75v24h-75z" fill="#e6e6e6"/><path d="M417 705h93v24h-93zM417 741h60v24h-60zM417 777h63v24h-63z" fill="#dadada"/><path d="M417 711h75v12h-75zM417 747h120v12H417zM417 783h63v12h-63z" fill="#56ad8a"/><path d="M502.500 705v24M523.500 741v24M541.500 777v24" stroke="#222" stroke-width="3"/></svg></button>
      <button aria-label="填充气泡图"><svg viewBox="634 663 243 180"><g fill="#9edcb6"><circle cx="718" cy="772" r="29"/><circle cx="779" cy="726" r="10"/></g><g fill="#56ad8a"><circle cx="721" cy="731" r="11"/><circle cx="750" cy="724" r="16"/><circle cx="762" cy="789" r="13"/></g><g fill="#ffbd7f"><circle cx="808" cy="740" r="20"/><circle cx="764" cy="756" r="18"/></g><circle cx="792" cy="771" r="12" fill="#f58f2c"/></svg></button>
    </div>
    <div class="hint">
      <p>对于散点图，尝试</p>
      <p>0 个或多个 <span class="tag">维度</span></p>
      <p>2 至 4 个 <span class="tag green">度量</span></p>
    </div>
  </div>
</aside>
<div class="meter"><span class="idle"></span><span class="level"></span></div>
</body>
</html>
```
FILE: styles.css
```css
* { box-sizing: border-box; }
body {
  margin: 0;
  height: 100vh;
  min-width: 1500px;
  display: flex;
  flex-direction: column;
  overflow: hidden;
  position: relative;
  background: #f4f4f4;
  color: #000;
  font: 18px/24px "Noto Sans", "Noto Sans CJK SC", sans-serif;
}
h1, h2, h3, p, ul { margin: 0; padding: 0; font-weight: 400; }
button, input, select { font: inherit; color: inherit; border: 0; background: none; padding: 0; margin: 0; }
svg { display: block; flex: none; }
.defs { position: absolute; width: 0; height: 0; }
.ln { fill: none; stroke: currentColor; stroke-width: 1; }
.mid { stroke-width: 1.300; }
.heavy { stroke-width: 2; }
.bold { stroke-width: 2.500; }
.over { stroke: #222; stroke-width: 2.700; }
.bigline { stroke: #666; stroke-width: 1.700; }
.fl { fill: currentColor; }
.arrow { fill: none; stroke: #505050; stroke-width: 2.500; }

/* title bar and menus */
.titlebar { flex: none; height: 34px; background: #0078d7; color: #fff; display: flex; align-items: center; }
.app-icon { width: 21px; height: 21px; margin: 0 7px 0 3px; }
.titlebar h1 { flex: 1; font-size: 19px; }
.win-buttons { display: flex; padding-right: 2px; }
.win-buttons button { width: 70px; height: 34px; display: flex; align-items: center; justify-content: center; }
.win-buttons svg { width: 16px; height: 16px; }
.menubar { flex: none; height: 29px; background: #fff; padding-left: 8px; display: flex; gap: 18px; line-height: 31px; }
.menubar u { text-underline-offset: 2px; }

/* toolbar */
.toolbar { flex: none; height: 62px; padding: 0 0 2px 10px; display: flex; align-items: center; border-bottom: 1px solid #d0d0d0; color: #666; }
.tool { width: 48px; height: 32px; display: flex; align-items: center; justify-content: center; }
.tool svg { width: 24px; height: 24px; }
.split { width: 44px; }
.drop { width: 14px; height: 32px; display: flex; align-items: center; justify-content: center; }
.drop svg { width: 5px; height: 3px; }
.toolbar .off { color: #b4b4b4; }
.sep { width: 1px; height: 35px; background: #d0d0d0; margin: 0 9px 0 11px; }
.combo { display: flex; align-items: center; border: 1px solid #c6c6c6; border-radius: 2px; background: #fafafa; color: #333; }
.combo select { appearance: none; flex: 1; align-self: stretch; outline: 0; }
.fit { width: 131px; height: 34px; margin: 0 9px 0 13px; font-size: 20px; background: #f6f6f6; }
.fit select { padding: 2px 0 0 10px; }
.fit svg { box-sizing: content-box; width: 10px; height: 6px; padding: 13px 8px; border-left: 1px solid #ddd; color: #555; }

.workspace { flex: 1; min-height: 0; display: flex; gap: 8px; }

/* data pane */
.data-pane { width: 315px; flex: none; background: #fff; border-right: 1px solid #d0d0d0; display: flex; flex-direction: column; }
.pane-tabs { display: flex; height: 39px; flex: none; font-size: 20px; }
.pane-tab { width: 155px; padding: 2px 0 0 27px; text-align: left; }
.pane-tab + .pane-tab { flex: 1; padding: 2px 8px 0 18px; display: flex; align-items: center; justify-content: space-between; background: #fafafa; border-left: 1px solid #d0d0d0; border-bottom: 1px solid #d0d0d0; }
.pane-tab svg { width: 6px; height: 12px; }
.source { flex: none; height: 44px; padding-left: 31px; display: flex; align-items: center; gap: 6px; border-bottom: 1px solid #ddd; color: #333; }
.source svg { width: 16px; height: 18px; color: #666; }
.search-row { flex: none; display: flex; align-items: center; padding: 11px 0 0 12px; color: #555; }
.search { width: 223px; height: 34px; display: flex; align-items: center; border: 1px solid #c6c6c6; border-radius: 2px; padding: 0 6px 0 8px; }
.search input { flex: 1; min-width: 0; outline: 0; }
.search input::placeholder { color: #999; opacity: 1; }
.search svg { width: 12px; height: 12px; }
.filter-btn { padding: 0 7px 0 5px; }
.filter-btn svg { width: 14px; height: 14px; }
.view-btn { height: 28px; padding-left: 7px; border-left: 1px solid #ccc; display: flex; align-items: center; gap: 8px; }
.rows { width: 13px; height: 10px; }
.car { width: 8px; height: 5px; }
.tables-head { flex: none; font-size: 20px; line-height: 24px; padding: 14px 0 6px 27px; }
.tree { flex: 1; min-height: 0; display: flex; }
.fields { flex: 1; min-width: 0; list-style: none; overflow: hidden; }
.fields li { height: 31px; display: flex; align-items: center; padding-left: 50px; }
.fields li svg, .fields li i { width: 18px; height: 12px; flex: none; margin-right: 11px; color: #3f7f9f; }
.fields li i { font: bold 9px/12px "Open Sans", sans-serif; text-align: center; }
.fields .measure svg { color: #3fa07f; }
.fields .table-name { height: 30px; padding-left: 14px; font-weight: 600; }
.fields .chev { width: 8px; height: 6px; margin-right: 9px; }
.fields .tbl { width: 12px; height: 12px; margin-right: 14px; }
.fields .first { position: relative; margin-top: 3px; }
.fields .first::before { content: ""; position: absolute; left: 44px; right: 0; top: -3px; height: 1px; background: #ddd; }
.vscroll { width: 25px; background: #f0f0f0; display: flex; flex-direction: column; align-items: center; }
.vscroll svg { width: 12px; height: 8px; margin: 9px 0; }
.vscroll .thumb { width: 24px; height: 219px; background: #cdcdcd; margin-bottom: auto; }

/* cards */
.cards { width: 232px; flex: none; display: flex; flex-direction: column; gap: 8px; }
.card { border: 1px solid #d4d4d4; background: #fafafa; padding: 9px 6px 0; color: #333; }
.card h3 { font-size: 18px; line-height: 24px; padding-left: 3px; }
.pages { height: 85px; border-top: 0; }
.filters { height: 177px; display: flex; flex-direction: column; gap: 4px; }
.filters h3 { margin-bottom: 8px; }
.marks { height: 303px; }
.pill { display: flex; align-items: center; height: 29px; border-radius: 15px; background: #4996b2; color: #fff; padding: 0 15px; white-space: nowrap; flex: none; }
.filters .pill { width: 218px; }
.pill.dark { background: #387e9c; }
.pill.green, .tag.green { background: #00b180; }
.pill svg { width: 10px; height: 10px; margin-right: 7px; }
.mark-type { margin: 17px 3px 0; height: 31px; font-size: 16px; }
.mark-type .bars { width: 12px; height: 12px; margin: 0 6px 0 14px; }
.mark-type .car { box-sizing: content-box; width: 10px; height: 6px; padding: 12px 8px; border-left: 1px solid #ddd; color: #555; }
.mark-grid { display: grid; grid-template-columns: 68px 68px 58px; gap: 9px; margin: 9px 3px 0; }
.mark-grid button { height: 63px; padding-top: 4px; border: 1px solid #d0d0d0; display: flex; flex-direction: column; align-items: center; justify-content: center; gap: 9px; font-size: 16px; line-height: 20px; white-space: nowrap; color: #111; }
.mark-grid svg { width: 22px; height: 22px; }
.encoding { display: flex; align-items: center; margin: 13px 0 0 16px; gap: 9px; }
.encoding svg { width: 15px; height: 15px; }
.encoding .pill { width: 169px; }

/* shelves */
.viz { flex: 1; min-width: 0; display: flex; flex-direction: column; }
.shelf { height: 39px; flex: none; margin-bottom: 8px; padding-bottom: 1px; border: 1px solid #d4d4d4; border-right: 0; background: #fafafa; display: flex; align-items: center; gap: 3px; }
.shelf:first-child { border-top: 0; height: 38px; }
.shelf .pill { width: 215px; }
.shelf-name { width: 179px; align-self: stretch; display: flex; align-items: center; gap: 9px; padding-left: 10px; border-right: 1px solid #d4d4d4; color: #333; }
.shelf-name svg { width: 12px; height: 12px; }

/* sheet */
.sheet { flex: 1; min-height: 0; margin-bottom: 8px; border: 1px solid #b4b4b4; border-right: 0; background: #fff; padding-left: 12px; overflow: hidden; color: #666; font-size: 19px; font-weight: 300; }
.sheet h2 { font-size: 30px; line-height: 40px; color: #333; padding: 14px 0 14px 1px; font-weight: 300; }
.chart { display: flex; }
.row-head { width: 158px; flex: none; padding-top: 40px; }
.region-label { height: 21px; line-height: 21px; padding-left: 6px; border-bottom: 1px solid #c8c8c8; color: #222; font-size: 17px; font-weight: 600; }
.row-body { height: 431px; padding-left: 6px; border-bottom: 1px solid #c8c8c8; display: flex; align-items: center; }
.member { width: 82px; }
.axis-title { writing-mode: vertical-rl; transform: rotate(180deg); line-height: 24px; color: #222; font-weight: 600; font-size: 17px; }
.ticks { flex: 1; align-self: stretch; padding: 47px 7px 0 0; display: flex; flex-direction: column; gap: 55px; text-align: right; line-height: 20px; }
.ticks :last-child { margin-top: -15px; }
.col-area { flex: 1; min-width: 0; overflow: hidden; }
.field-title { height: 20px; line-height: 22px; text-align: center; padding-right: 258px; color: #222; font-size: 17px; font-weight: 600; border-left: 1px solid #ccc; }
.years, .panes, .plot, .names { display: flex; }
.year { flex: none; background: linear-gradient(#c8c8c8, #c8c8c8) 0 0 / 1px 100% no-repeat; }
.year-name { height: 20px; width: 340px; line-height: 20px; text-align: center; }
.pane { width: 80px; background: linear-gradient(#c8c8c8, #c8c8c8) 0 0 / 1px 100% no-repeat; }
.pane.wide { width: 180px; }
.cat { height: 21px; line-height: 20px; text-align: center; border-bottom: 1px solid #c8c8c8; white-space: nowrap; }
.plot {
  height: 431px; align-items: flex-end; padding-left: 3px; gap: 5px; border-bottom: 1px solid #c8c8c8;
  background:
    linear-gradient(#f0f0f0, #f0f0f0) 1px 58px / 100% 1px no-repeat,
    linear-gradient(#f0f0f0, #f0f0f0) 1px 132px / 100% 1px no-repeat,
    linear-gradient(#f0f0f0, #f0f0f0) 1px 207px / 100% 1px no-repeat,
    linear-gradient(#f0f0f0, #f0f0f0) 1px 281px / 100% 1px no-repeat,
    linear-gradient(#f0f0f0, #f0f0f0) 1px 356px / 100% 1px no-repeat;
}
.plot b { width: 15px; flex: none; }
.names { height: 119px; padding-top: 5px; align-items: flex-start; }
.names span { writing-mode: vertical-rl; transform: rotate(180deg); line-height: 20px; padding-right: 20px; }
.hscroll { margin-top: 5px; height: 24px; background: #f0f0f0; display: flex; align-items: center; }
.hscroll svg { width: 8px; height: 12px; margin: 0 9px; }
.hscroll .thumb { width: 607px; height: 24px; background: #cdcdcd; }

/* bottom strips */
.sheet-tabs { flex: none; height: 46px; border-top: 1px solid #c8c8c8; border-bottom: 1px solid #c8c8c8; background: #e6e6e6; display: flex; color: #555; }
.sheet-tabs button { border-right: 1px solid #c8c8c8; padding: 0 11px 0 9px; }
.sheet-tabs .on { background: #fafafa; }
.sheet-tabs .source-tab { width: 196px; padding-left: 13px; display: flex; align-items: center; gap: 7px; }
.source-tab svg { width: 8px; height: 12px; }
.sheet-tabs .new { width: 32px; padding: 0 7px; }
.new svg { width: 16px; height: 16px; }
.status { flex: none; height: 17px; overflow: hidden; background: #eaeaea; display: flex; padding-left: 4px; gap: 30px; font-size: 17px; line-height: 30px; color: #111; }
.status-right { margin-left: auto; display: flex; }
.status-right > * { height: 17px; border-left: 1px solid #c4c4c4; }
.c1 { width: 189px; }
.c2 { width: 39px; }
.c3 { width: 69px; }
.nav-icons { width: 73px; }
.view-icons { width: 74px; }

/* recommendation panel, floating over the sheet */
.show-me { position: absolute; right: 5px; top: 71px; width: 306px; display: flex; flex-direction: column; filter: drop-shadow(2px 2px 2px rgba(0, 0, 0, .4)); }
.show-tab { align-self: flex-end; width: 146px; height: 55px; margin-bottom: -1px; position: relative; background: #fafafa; border: 1px solid #dcdcdc; border-bottom: 0; display: flex; align-items: center; gap: 7px; padding: 0 0 6px 15px; font-size: 20px; white-space: nowrap; }
.show-tab svg { width: 14px; height: 15px; }
.show-body { height: 826px; background: #fafafa; border: 1px solid #dcdcdc; padding: 21px 0 0 20px; }
.types { display: grid; grid-template-columns: repeat(3, 83px); gap: 7px; }
.types button { height: 62px; background: #fff; border: 1px solid #e0e0e0; border-radius: 1px; }
.types svg { width: 81px; height: 60px; }
.types .on { border-color: #dd6c36; box-shadow: inset 0 0 0 2px #dd6c36; }
.hint { padding: 21px 0 0 1px; }
.hint p { height: 41px; line-height: 35px; }
.hint p:first-child { height: 38px; }
.tag { display: inline-block; height: 29px; line-height: 29px; padding: 0 18px; margin-left: 1px; border-radius: 15px; background: #4996b2; color: #fff; }

/* level meter docked on the screen edge */
.meter { position: absolute; right: 0; top: 510px; width: 14px; height: 89px; background: #4d5160; border: 1px solid #33363f; border-right: 0; border-radius: 5px 0 0 5px; padding: 10px 1px 10px 5px; display: flex; flex-direction: column; }
.idle { height: 15px; background: repeating-linear-gradient(#30333c 0 2px, #4d5160 2px 3px); }
.level { flex: 1; background: repeating-linear-gradient(transparent 0 2px, #4d5160 2px 3px), linear-gradient(#eda04a, #d8d05a 35%, #8fd07c 60%, #4fc8c8); }
```
